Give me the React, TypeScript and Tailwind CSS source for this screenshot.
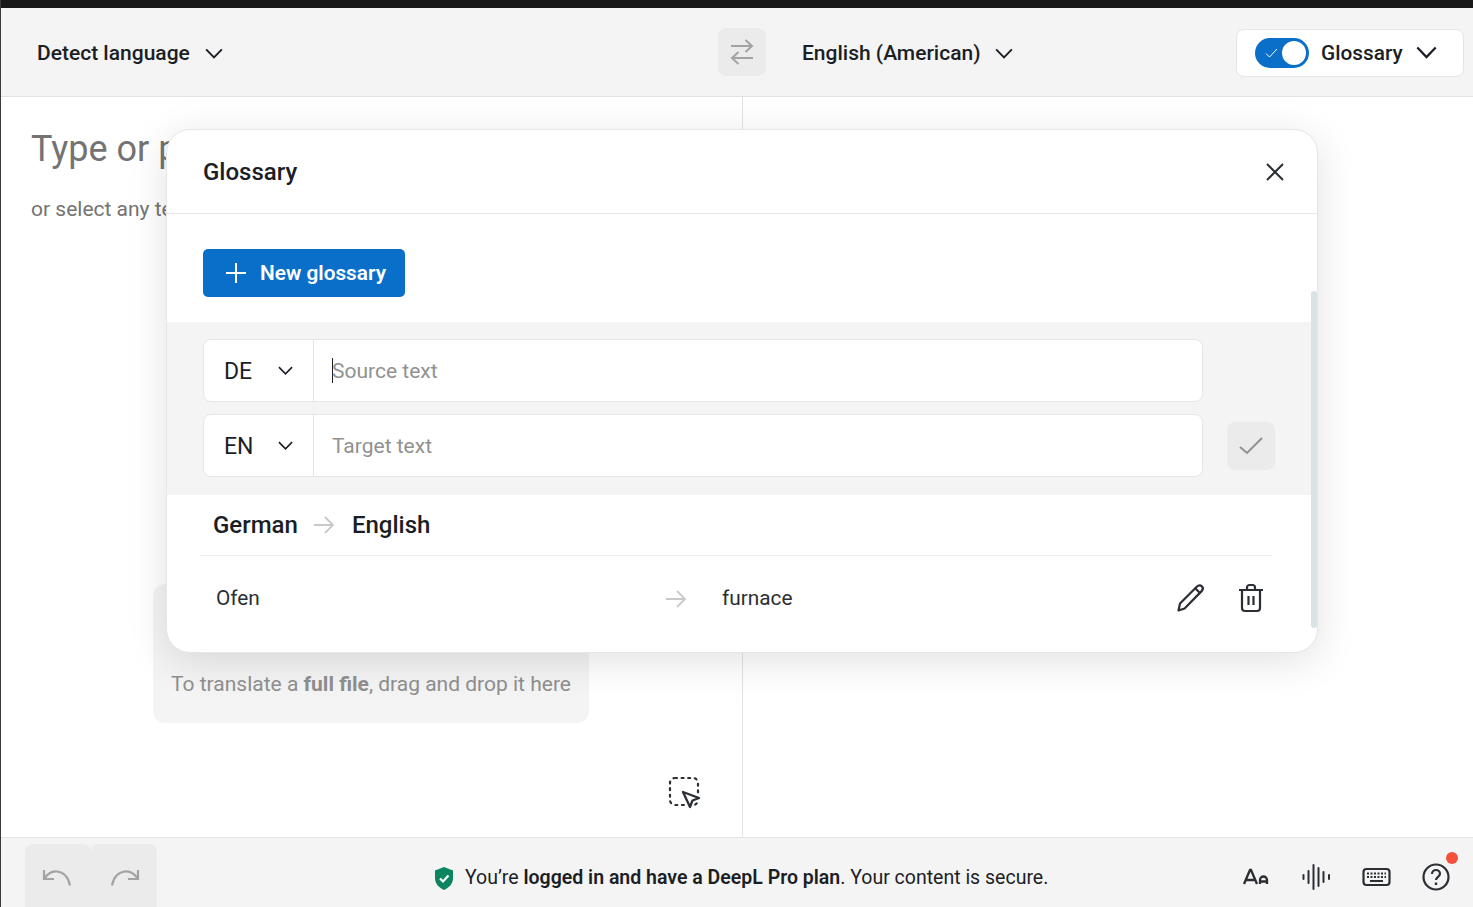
import React from "react";

const Chevron = ({ w = 16, className = "" }: { w?: number; className?: string }) => (
  <svg width={w} height={w * 0.625} viewBox="0 0 16 10" fill="none" className={className}>
    <path d="M1 1.2 8 8.400l7-7.200" stroke="#1b1e25" strokeWidth="1.700" />
  </svg>
);

const SwapIcon = () => (
  <svg width="24" height="26" viewBox="0 0 24 26" fill="none" stroke="#a3a3a3" strokeWidth="2">
    <path d="M1 7h21M15.500 1 22 7l-6.500 6" />
    <path d="M23 19H2M8.500 13 2 19l6.500 6" />
  </svg>
);

const Arrow = ({ size = 22 }: { size?: number }) => (
  <svg width={size} height={size} viewBox="0 0 22 22" fill="none" stroke="#c9c9c9" strokeWidth="1.800">
    <path d="M1 11h19M12 3l8 8-8 8" />
  </svg>
);

const Cell = ({ code, placeholder, caret }: { code: string; placeholder: string; caret?: boolean }) => (
  <div className="flex h-[63px] w-[1000px] rounded-lg border border-[#e6e6e6] bg-white">
    <div className="flex w-[110px] items-center justify-between border-r border-[#e6e6e6] pl-5 pr-5 text-[23px] text-[#1b1e25]">
      <span className="pt-[3px]">{code}</span>
      <Chevron w={15} />
    </div>
    <div className="flex flex-1 items-center pl-[18px] text-[21px] text-[#919191]">
      {caret && <span className="mr-[-1px] h-[25px] w-px bg-[#1b1e25]" />}
      <span className="pt-[2px]">{placeholder}</span>
    </div>
  </div>
);

const Square = ({ children }: { children: React.ReactNode }) => (
  <button className="flex h-[63px] w-[66px] items-start justify-center rounded-t-lg bg-[#ebebeb] pt-[23px]">{children}</button>
);

export default function App() {
  return (
    <div className="relative flex h-[907px] w-[1473px] flex-col overflow-hidden border-l border-[#3a3a3a] bg-white font-['Roboto',sans-serif] text-[#1b1e25]">
      <div className="-ml-px h-2 shrink-0 bg-[#191919]" />
      <header className="flex h-[89px] shrink-0 items-center border-b border-[#e3e3e3] bg-[#f4f4f4]">
        <div className="mt-[3px] flex w-[717px] items-center pl-[36px]">
          <span className="text-[21px] font-medium">Detect language</span>
          <Chevron w={18} className="ml-[15px]" />
        </div>
        <div className="flex h-12 w-12 items-center justify-center rounded-lg bg-[#ebebeb]">
          <SwapIcon />
        </div>
        <div className="mt-[3px] flex items-center pl-[36px]">
          <span className="text-[21px] font-medium">English (American)</span>
          <Chevron w={18} className="ml-[14px]" />
        </div>
        <div className="ml-auto mr-[9px] mt-[2px] flex h-12 w-[228px] items-center rounded-lg border border-[#e6e6e6] bg-white pl-[18px]">
          <div className="relative h-[30px] w-[54px] rounded-full bg-[#0a6fc9]">
            <span className="absolute right-[3px] top-[3px] h-[24px] w-[24px] rounded-full bg-white" />
            <svg className="absolute left-[10px] top-[10px]" width="13" height="10" viewBox="0 0 13 10" fill="none" stroke="#fff" strokeWidth="1">
              <path d="M1 5.500 4.500 9 12 1" />
            </svg>
          </div>
          <span className="ml-3 pt-[2px] text-[20.8px] font-medium">Glossary</span>
          <Chevron w={21} className="ml-[13px]" />
        </div>
      </header>

      <main className="relative flex flex-1">
        <section className="relative w-[742px] border-r border-[#e3e3e3] pl-[30px] pt-[29px]">
          <p className="whitespace-nowrap text-[36px] leading-[46px] text-[#737373]">Type or paste text</p>
          <p className="mt-[24px] whitespace-nowrap text-[21px] leading-[26px] text-[#737373]">or select any text</p>
          <div className="mt-[362px] ml-[122px] flex h-[139px] w-[436px] items-end justify-center rounded-xl bg-[#f4f4f4] pb-[23px] text-[21px] text-[#8f8f8f]">
            <span>
              To translate a <b className="font-bold">full file</b>, drag and drop it here
            </span>
          </div>
          <svg className="absolute left-[667px] top-[679px]" width="34" height="34" viewBox="0 0 34 34" fill="none" stroke="#2b2e34">
            <rect x="2" y="2" width="28" height="27" rx="5" strokeWidth="2.200" strokeDasharray="2 4.600" strokeLinecap="round" />
            <path d="M15 16 31 22l-6.500 2.500L22 31Z" stroke="#fff" strokeWidth="6" strokeLinejoin="round" />
            <path d="M15 16 31 22l-6.500 2.500L22 31Z" fill="#fff" strokeWidth="2.300" strokeLinejoin="round" />
          </svg>
        </section>
      </main>

      <footer className="flex h-[70px] shrink-0 items-start border-t border-[#e3e3e3] bg-[#f4f4f4] pt-[6px]">
        <div className="ml-[24px] flex">
          <Square>
            <svg width="32" height="22" viewBox="0 0 32 22" fill="none" stroke="#a3a3a3" strokeWidth="2.200">
              <path d="M2 3v9h10" />
              <path d="M2.500 11.500C6 6 10.500 4 15 4.500c7 .8 11.500 6 13 14" />
            </svg>
          </Square>
          <Square>
            <svg width="32" height="22" viewBox="0 0 32 22" fill="none" stroke="#a3a3a3" strokeWidth="2.200">
              <path d="M30 3v9H20" />
              <path d="M29.500 11.500C26 6 21.500 4 17 4.500c-7 .8-11.500 6-13 14" />
            </svg>
          </Square>
        </div>
        <div className="ml-[277px] mt-[22px] flex items-center text-[19.5px] leading-[24px]">
          <svg width="20" height="23" viewBox="0 0 20 23" className="mr-[11px]">
            <path d="M10 0 19 3.500V11c0 5.500-3.500 9.500-9 12-5.500-2.500-9-6.500-9-12V3.500Z" fill="#0a8560" />
            <path d="M6 11.500 9 14.500 14.500 8.500" fill="none" stroke="#fff" strokeWidth="2.200" />
          </svg>
          <span>
            You’re <b className="font-semibold">logged in and have a DeepL Pro plan</b>. Your content is secure.
          </span>
        </div>
        <div className="ml-auto mr-[23px] mt-[19px] flex items-center gap-[31px]">
          <svg width="29" height="28" viewBox="0 0 29 28" fill="none" stroke="#2b2e34" strokeWidth="2.300">
            <path d="M2 21 8 7h1l6 14M4 17h9" />
            <path d="M18 21v-4a3 3 0 0 1 7 0v4M18 18.500h7" />
          </svg>
          <svg width="29" height="28" viewBox="0 0 29 28" fill="none" stroke="#2b2e34" strokeWidth="2" strokeLinecap="round">
            <path d="M1.500 12v4M6.500 8v12M11.500 2v24M16.500 5v18M21.500 9v10M27 12v4" />
          </svg>
          <svg width="29" height="28" viewBox="0 0 29 28" fill="none" stroke="#2b2e34">
            <rect x="1.500" y="6" width="26" height="16" rx="3" strokeWidth="2.200" />
            <path d="M5 10.500h19M5 14h19" strokeWidth="1.800" strokeDasharray="2 1.500" />
            <path d="M8 18h13" strokeWidth="2" />
          </svg>
          <div className="relative h-[28px] w-[28px]">
            <svg width="28" height="28" viewBox="0 0 28 28" fill="none" stroke="#2b2e34" strokeWidth="2.200">
              <circle cx="14" cy="14" r="12.500" />
              <path d="M10 11c0-2.500 2-4 4-4s4 1.500 4 3.800c0 3-4 3-4 6.200" />
              <path d="M14 19.500v2.500" strokeWidth="2.400" />
            </svg>
            <span className="absolute -right-[8px] -top-[11px] h-3 w-3 rounded-full bg-[#f4513c]" />
          </div>
        </div>
      </footer>

      <div className="absolute left-[165px] top-[129px] h-[524px] w-[1152px] overflow-hidden rounded-[24px] border border-[#e6e6e6] bg-white shadow-[0_8px_40px_rgba(0,0,0,0.12)]">
        <div className="flex h-[84px] items-center justify-between border-b border-[#e6e6e6] pl-[36px] pr-[32px]">
          <h2 className="text-[24px] font-medium text-[#1b1e25]">Glossary</h2>
          <svg width="20" height="20" viewBox="0 0 20 20" fill="none" stroke="#2b2e34" strokeWidth="2">
            <path d="M2 2l16 16M18 2 2 18" />
          </svg>
        </div>
        <div className="flex h-[108px] items-start pl-[36px] pt-[35px]">
          <button className="flex h-12 w-[202px] items-center rounded-[5px] bg-[#0a6fc9] pl-[23px] pt-[1px] text-[20.8px] font-semibold text-white">
            <svg width="20" height="20" viewBox="0 0 20 20" fill="none" stroke="#fff" strokeWidth="2" className="mb-[1px] mr-[14px]">
              <path d="M10 0v20M0 10h20" />
            </svg>
            New glossary
          </button>
        </div>
        <div className="flex h-[173px] flex-col gap-3 bg-[#f4f4f4] pl-[36px] pt-[17px]">
          <Cell code="DE" placeholder="Source text" caret />
          <div className="flex items-center">
            <Cell code="EN" placeholder="Target text" />
            <div className="ml-6 flex h-12 w-12 items-center justify-center rounded-lg bg-[#ebebeb]">
              <svg width="24" height="18" viewBox="0 0 24 18" fill="none" stroke="#919191" strokeWidth="2">
                <path d="M1 10l7 6L23 1" />
              </svg>
            </div>
          </div>
        </div>
        <div className="ml-[33px] flex h-[61px] w-[1072px] items-center gap-[15px] border-b border-[#efefef] pl-[13px] text-[24px] font-medium text-[#1b1e25]">
          <span>German</span>
          <Arrow />
          <span className="ml-[2px]">English</span>
        </div>
        <div className="flex h-[85px] items-center pl-[49px] text-[20.8px] text-[#2b2e34]">
          <span className="w-[449px]">Ofen</span>
          <Arrow />
          <span className="ml-[35px]">furnace</span>
          <svg className="mb-[1px] ml-[384px]" width="30" height="30" viewBox="0 0 30 30" fill="none" stroke="#2b2e34" strokeWidth="2.200" strokeLinejoin="round">
            <path d="M2.500 27.500 4 20.500 21 3.500c1.500-1.500 3.500-1.500 4.800-.2s1.300 3.300-.2 4.800L8.600 25.500Z" />
            <path d="M19.500 5.500l5 5" />
          </svg>
          <svg className="mb-[1px] ml-[30px]" width="30" height="30" viewBox="0 0 30 30" fill="none" stroke="#2b2e34" strokeWidth="2.200">
            <path d="M3 7h24M11 7V4.500A2.500 2.500 0 0 1 13.500 2h3A2.500 2.500 0 0 1 19 4.500V7" />
            <path d="M6 7v18a3 3 0 0 0 3 3h12a3 3 0 0 0 3-3V7" />
            <path d="M12.500 13v9M17.500 13v9" />
          </svg>
        </div>
        <div className="absolute right-0 top-[161px] h-[337px] w-[6px] rounded-full bg-[#dbe2e6]" />
      </div>
    </div>
  );
}
